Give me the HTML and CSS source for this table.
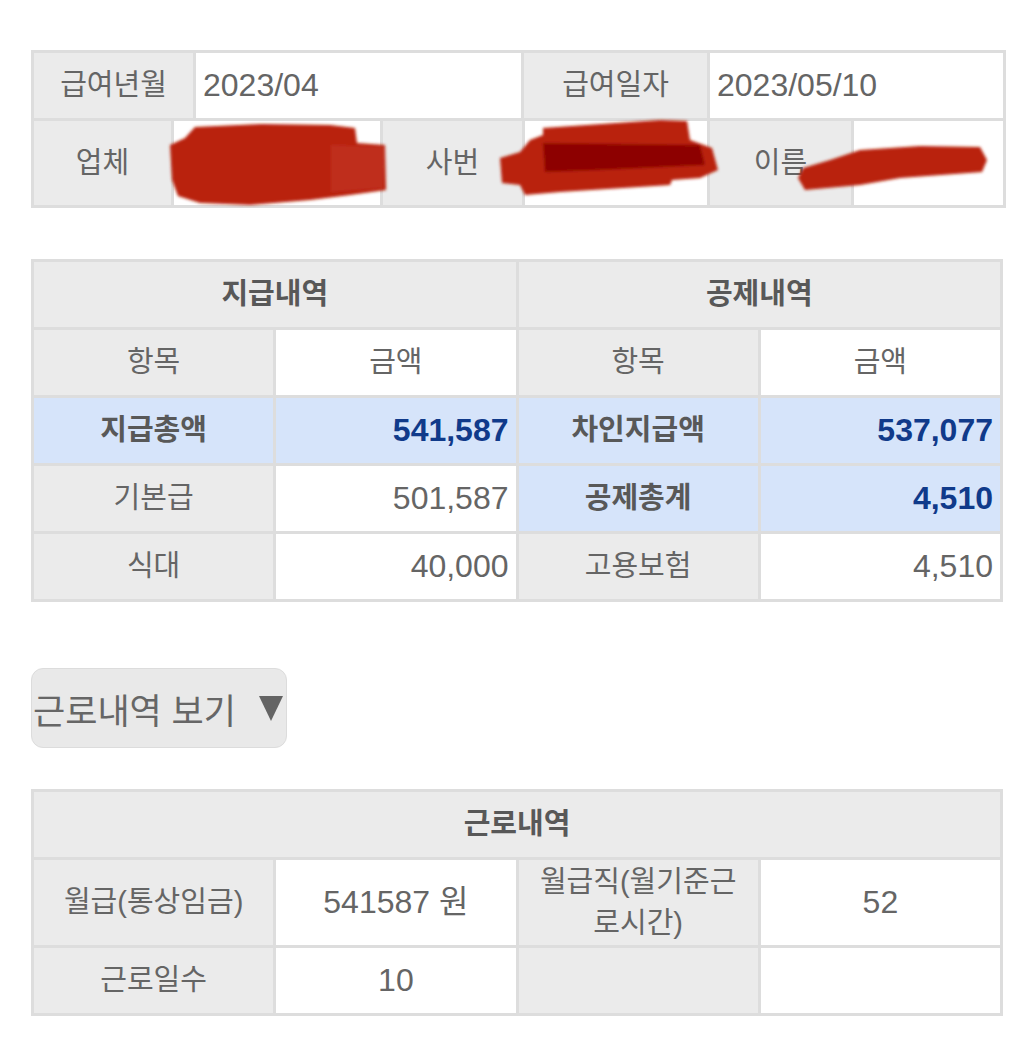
FILE: index.html
```html
<!DOCTYPE html>
<html lang="ko">
<head>
<meta charset="utf-8">
<title>급여명세서</title>
<link rel="stylesheet" href="styles.css">
</head>
<body>
<div class="page">
  <section class="info">
    <table class="grid info-top">
      <colgroup>
        <col class="c162"><col class="c328"><col class="c186"><col class="c296">
      </colgroup>
      <tr>
        <td class="label">급여년월</td>
        <td class="value left">2023/04</td>
        <td class="label">급여일자</td>
        <td class="value left">2023/05/10</td>
      </tr>
    </table>
    <table class="grid info-bottom">
      <colgroup>
        <col class="c140"><col class="c209"><col class="c142"><col class="c185"><col class="c144"><col class="c152">
      </colgroup>
      <tr>
        <td class="label">업체</td>
        <td class="value left"></td>
        <td class="label">사번</td>
        <td class="value left"></td>
        <td class="label">이름</td>
        <td class="value left"></td>
      </tr>
    </table>
    <svg class="redact" width="972" height="160" viewBox="0 0 972 160" aria-hidden="true">
      <defs>
        <filter id="soft" x="-10%" y="-20%" width="120%" height="140%">
          <feGaussianBlur stdDeviation="1.6"/>
        </filter>
      </defs>
      <g filter="url(#soft)">
        <path fill="#b9200c" d="M164 77 L230 74 L299 75 L324 78 L326 93 L354 95 L355 140 L319 145 L279 150 L219 155 L169 153 L147 146 L141 130 L139 95 L154 88 Z"/>
        <path fill="#c0311f" opacity="0.8" d="M300 95 L354 97 L352 138 L300 142 Z"/>
        <path fill="#b9200c" d="M512 78 L629 70 L656 71 L659 90 L681 98 L687 120 L669 128 L641 130 L639 135 L529 142 L494 145 L489 135 L471 133 L469 108 L489 102 L499 90 L512 85 Z"/>
        <path fill="#8d0100" d="M512 93 L669 95 L674 115 L569 120 L514 122 Z"/>
        <path fill="#b9200c" d="M799 110 L829 100 L889 96 L949 97 L956 110 L951 122 L869 128 L829 135 L774 140 L767 128 L772 118 Z"/>
      </g>
    </svg>
  </section>

  <table class="grid pay">
    <tr>
      <td class="label head" colspan="2">지급내역</td>
      <td class="label head" colspan="2">공제내역</td>
    </tr>
    <tr>
      <td class="label">항목</td>
      <td class="value center ko">금액</td>
      <td class="label">항목</td>
      <td class="value center ko">금액</td>
    </tr>
    <tr>
      <td class="label hl strong">지급총액</td>
      <td class="value hl total">541,587</td>
      <td class="label hl strong">차인지급액</td>
      <td class="value hl total">537,077</td>
    </tr>
    <tr>
      <td class="label">기본급</td>
      <td class="value">501,587</td>
      <td class="label hl strong">공제총계</td>
      <td class="value hl total">4,510</td>
    </tr>
    <tr>
      <td class="label">식대</td>
      <td class="value">40,000</td>
      <td class="label">고용보험</td>
      <td class="value">4,510</td>
    </tr>
  </table>

  <button class="toggle" type="button">
    <span>근로내역 보기</span>
    <svg class="caret" width="26" height="28" viewBox="0 0 26 28" aria-hidden="true">
      <polygon points="1,2 25,2 13,27" fill="#646464"/>
    </svg>
  </button>

  <table class="grid work">
    <tr>
      <td class="label head" colspan="4">근로내역</td>
    </tr>
    <tr class="tall">
      <td class="label">월급(통상임금)</td>
      <td class="value center">541587 원</td>
      <td class="label wrap">월급직(월기준근<br>로시간)</td>
      <td class="value center">52</td>
    </tr>
    <tr>
      <td class="label">근로일수</td>
      <td class="value center">10</td>
      <td class="label"></td>
      <td class="value"></td>
    </tr>
  </table>
</div>
</body>
</html>
```

FILE: styles.css
```css
html, body {
  margin: 0;
  padding: 0;
  background: #ffffff;
}

body {
  font-family: "Liberation Sans", Arial, "Noto Sans CJK KR", sans-serif;
  color: #666666;
}

.page {
  padding: 50px 31px 0 31px;
}

.grid {
  width: 972px;
  border-collapse: collapse;
  table-layout: fixed;
}

.grid td {
  border: 3px solid #dddddd;
  height: 65px;
  padding: 0 7px;
  vertical-align: middle;
  line-height: 1.4;
}

.label {
  background: #ebebeb;
  text-align: center;
  font-size: 29px;
  color: #656565;
}

.value {
  background: #ffffff;
  text-align: right;
  font-size: 32px;
  color: #656565;
}

.value.left { text-align: left; }
.value.center { text-align: center; }
.value.ko { font-size: 29px; }

.head {
  font-weight: 700;
  color: #585858;
}

.hl {
  background: #d6e4fa;
}

.strong {
  font-weight: 700;
  color: #585858;
}

.total {
  font-weight: 700;
  color: #103a8a;
}

/* top info block */
.info {
  position: relative;
  width: 972px;
}

.info-bottom td {
  border-top: 0;
  height: 84px;
}

.c162 { width: 162px; }
.c328 { width: 328px; }
.c186 { width: 186px; }
.c296 { width: 296px; }
.c140 { width: 140px; }
.c209 { width: 209px; }
.c142 { width: 142px; }
.c185 { width: 185px; }
.c144 { width: 144px; }
.c152 { width: 152px; }

.redact {
  position: absolute;
  left: 0;
  top: 0;
  pointer-events: none;
}

/* pay table */
.pay {
  margin-top: 51px;
}

/* toggle */
.toggle {
  display: flex;
  align-items: center;
  gap: 22px;
  margin-top: 66px;
  width: 256px;
  height: 80px;
  padding: 0 0 0 1px;
  background: #e9e9e9;
  border: 1px solid #dcdcdc;
  border-radius: 12px;
  font-family: "Liberation Sans", Arial, "Noto Sans CJK KR", sans-serif;
  font-size: 35px;
  color: #666666;
  white-space: nowrap;
}

.caret {
  display: block;
  flex: none;
}

/* work table */
.work {
  margin-top: 41px;
}

.work .tall td {
  height: 85px;
}

.wrap {
  line-height: 39px;
}
```
